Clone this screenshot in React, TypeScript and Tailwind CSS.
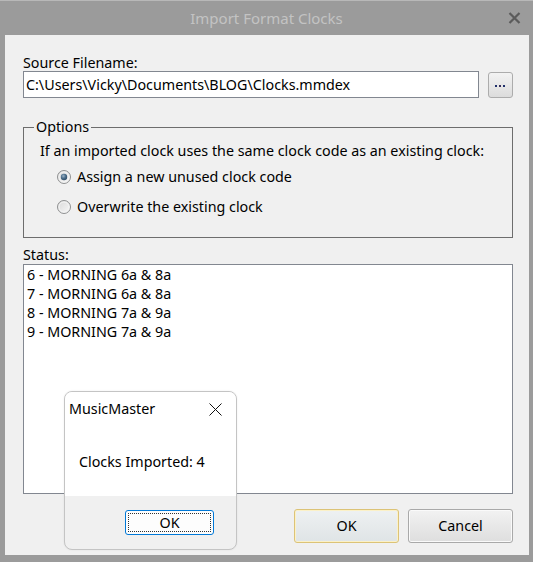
import React from "react";

const FONT = { fontFamily: '"Noto Sans", "Open Sans", sans-serif' };

function Radio({ checked }: { checked: boolean }) {
  return (
    <svg width="14" height="14" viewBox="0 0 14 14">
      <defs>
        <linearGradient id={checked ? "rgA" : "rgB"} x1="0" y1="0" x2="1" y2="1">
          <stop offset="0" stopColor="#d8d8d8" />
          <stop offset="1" stopColor="#f8f8f8" />
        </linearGradient>
        <radialGradient id="dot" cx="0.4" cy="0.35" r="0.7">
          <stop offset="0" stopColor="#9fb4c6" />
          <stop offset="0.5" stopColor="#4d6f8c" />
          <stop offset="1" stopColor="#2c4a63" />
        </radialGradient>
      </defs>
      <circle cx="7" cy="7" r="6.5" fill={`url(#${checked ? "rgA" : "rgB"})`} stroke="#8f9091" strokeWidth="1" />
      <circle cx="7" cy="7" r="5" fill="none" stroke="#f4f4f4" strokeWidth="1" />
      {checked && <circle cx="7" cy="7" r="3.2" fill="url(#dot)" />}
    </svg>
  );
}

export default function App() {
  return (
    <div
      className="relative w-[533px] h-[562px] bg-[#9b9b9b] flex flex-col overflow-hidden text-[14.3px] text-black"
      style={FONT}
    >
      {/* title bar */}
      <div className="h-[35px] shrink-0 grid grid-cols-[1fr_auto_1fr] items-center border-t border-[#b8b8b8]">
        <div />
        <div className="text-[15px] text-[#c3c3c3] leading-[18px] pb-[1px]">Import Format Clocks</div>
        <div className="flex justify-end pr-[12px]">
          <svg width="13" height="12" viewBox="0 0 13 12">
            <path d="M1.5 1 L11.5 11 M11.5 1 L1.5 11" stroke="#5b5b5b" strokeWidth="2.2" />
          </svg>
        </div>
      </div>

      {/* client */}
      <div className="ml-[5px] w-[524px] h-[520px] bg-[#f0f0f0] flex flex-col pl-[18px] pr-[16px] pt-[19px]">
        <div className="leading-[17px] h-[17px]">Source Filename:</div>
        <div className="flex items-center h-[27px]">
          <div className="w-[456px] h-[27px] bg-white border border-[#828790] flex items-center pl-[2px] leading-[18px]">
            C:\Users\Vicky\Documents\BLOG\Clocks.mmdex
          </div>
          <div className="ml-[9px] w-[25px] h-[26px] rounded-[3px] border border-[#acacac] bg-gradient-to-b from-[#f3f3f3] to-[#dcdcdc] flex items-center justify-center pt-[4px]">
            <svg width="11" height="3" viewBox="0 0 11 3">
              <rect x="0" y="0" width="2" height="2" fill="#1e2f6b" />
              <rect x="4" y="0" width="2" height="2" fill="#3a2f5a" />
              <rect x="8" y="0" width="2" height="2" fill="#1e2f6b" />
            </svg>
          </div>
        </div>

        <fieldset className="mt-[20px] border border-[#6d6d6d] px-[16px] pt-[6px] pb-[20px]">
          <legend className="ml-[-6px] px-[2px] leading-[18px]">Options</legend>
          <div className="leading-[18px] h-[18px] whitespace-nowrap">If an imported clock uses the same clock code as an existing clock:</div>
          <div className="mt-[7px] h-[20px] flex items-center pl-[17px] gap-[6px]">
            <Radio checked />
            <span className="leading-[18px]">Assign a new unused clock code</span>
          </div>
          <div className="mt-[10px] h-[20px] flex items-center pl-[17px] gap-[6px]">
            <Radio checked={false} />
            <span className="leading-[18px]">Overwrite the existing clock</span>
          </div>
        </fieldset>

        <div className="mt-[8px] leading-[18px] h-[18px]">Status:</div>
        <div className="h-[230px] bg-white border border-[#828790] pl-[3px] leading-[19px] overflow-hidden">
          <div>6 - MORNING 6a &amp; 8a</div>
          <div>7 - MORNING 6a &amp; 8a</div>
          <div>8 - MORNING 7a &amp; 9a</div>
          <div>9 - MORNING 7a &amp; 9a</div>
        </div>

        <div className="mt-[15px] flex justify-end gap-[9px]">
          <div className="w-[105px] h-[34px] rounded-[3px] border border-[#dcc377] shadow-[inset_0_0_0_1px_#fbf1c8] bg-gradient-to-b from-[#eef1f2] to-[#dfe4e6] flex items-center justify-center">
            OK
          </div>
          <div className="w-[105px] h-[34px] rounded-[3px] border border-[#a9a9a9] shadow-[inset_0_0_0_1px_#fafafa] bg-gradient-to-b from-[#f2f2f2] to-[#dedede] flex items-center justify-center">
            Cancel
          </div>
        </div>
      </div>
      <div className="flex-1" />

      {/* message box overlay */}
      <div className="absolute left-[64px] top-[391px] w-[173px] h-[159px] rounded-[8px] border border-[#c4c4c4] overflow-hidden flex flex-col bg-[#f0f0f0] shadow-[0_0_2px_rgba(0,0,0,0.08)]">
        <div className="bg-white flex-1 flex flex-col">
          <div className="h-[32px] flex items-center justify-between pl-[4px] pr-[14px] pt-[2px]">
            <span className="leading-[18px]">MusicMaster</span>
            <svg width="13" height="13" viewBox="0 0 13 13">
              <path d="M0.5 0.5 L12.5 12.5 M12.5 0.5 L0.5 12.5" stroke="#111" strokeWidth="1" />
            </svg>
          </div>
          <div className="pl-[14px] mt-[29px] leading-[18px]">Clocks Imported: 4</div>
        </div>
        <div className="h-[53px] flex items-start justify-end pr-[22px] pt-[14px]">
          <div className="w-[89px] h-[25px] rounded-[3px] border border-[#0078d7] bg-[#fdfdfd] p-[2px]">
            <div className="w-full h-full border border-dotted border-[#333] flex items-center justify-center leading-[16px]">
              OK
            </div>
          </div>
        </div>
      </div>
    </div>
  );
}
